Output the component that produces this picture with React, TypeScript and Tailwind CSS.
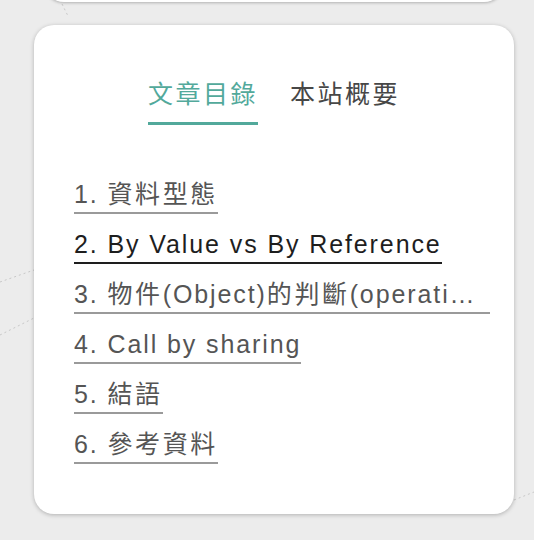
import React from 'react'

const TOC = [
  '1. 資料型態',
  '2. By Value vs By Reference',
  '3. 物件(Object)的判斷(operation)',
  '4. Call by sharing',
  '5. 結語',
  '6. 參考資料',
]

const FONT = "font-['Liberation_Sans','Noto_Sans_CJK_TC',sans-serif]"
const CJK = /([\u3400-\u9fff]+)/

// CJK glyphs sit a little wider apart than the latin ones
function Spaced({ text }: { text: string }) {
  return (
    <>
      {text.split(CJK).map((s, i) =>
        CJK.test(s) ? (
          <span key={i} className="tracking-[2.6px]">{s}</span>
        ) : (
          <React.Fragment key={i}>{s}</React.Fragment>
        ),
      )}
    </>
  )
}

export default function App() {
  const active = 1
  return (
    <div className={`relative h-[540px] w-[534px] overflow-hidden bg-[#ececec] ${FONT}`}>
      {/* faint dashed strokes on the page background */}
      <svg className="absolute inset-0" width="534" height="540">
        <g stroke="#c8c8c8" strokeWidth="1" strokeDasharray="2 3" fill="none">
          <line x1="0" y1="282" x2="34" y2="270" />
          <line x1="0" y1="335" x2="34" y2="318" />
          <line x1="62" y1="4" x2="68" y2="16" />
          <line x1="514" y1="500" x2="534" y2="492" />
        </g>
      </svg>

      <div className="relative ml-[44px] mr-[30px] -mt-[20px] h-[22px] rounded-b-[20px] bg-white shadow-[0_1px_3px_rgba(0,0,0,0.25)]" />

      <div className="relative ml-[34px] mr-[20px] mt-[23px] rounded-[20px] bg-white pt-[51px] pb-[50px] pl-[40px] pr-[24px] shadow-[0_1px_4px_rgba(0,0,0,0.25)]">
        <div className="flex justify-center gap-[32px] pr-[16px] text-[25px] leading-[36px] tracking-[2.5px]">
          <span className="border-b-[3px] border-[#52a99b] pb-[10px] text-[#52a99b]">文章目錄</span>
          <span className="pb-[10px] text-[#474747]">本站概要</span>
        </div>

        <ul className="mt-[51px] flex flex-col gap-[12px] text-[25px] leading-[36px] tracking-[1.9px]">
          {TOC.map((t, i) => (
            <li key={t} className="flex">
              <a
                className={
                  i === active
                    ? 'max-w-full truncate border-b-2 border-[#1e1e1e] text-[#1e1e1e]'
                    : 'max-w-full truncate border-b-2 border-[#9a9a9a] text-[#555]'
                }
              >
                <Spaced text={t} />
              </a>
            </li>
          ))}
        </ul>
      </div>
    </div>
  )
}
